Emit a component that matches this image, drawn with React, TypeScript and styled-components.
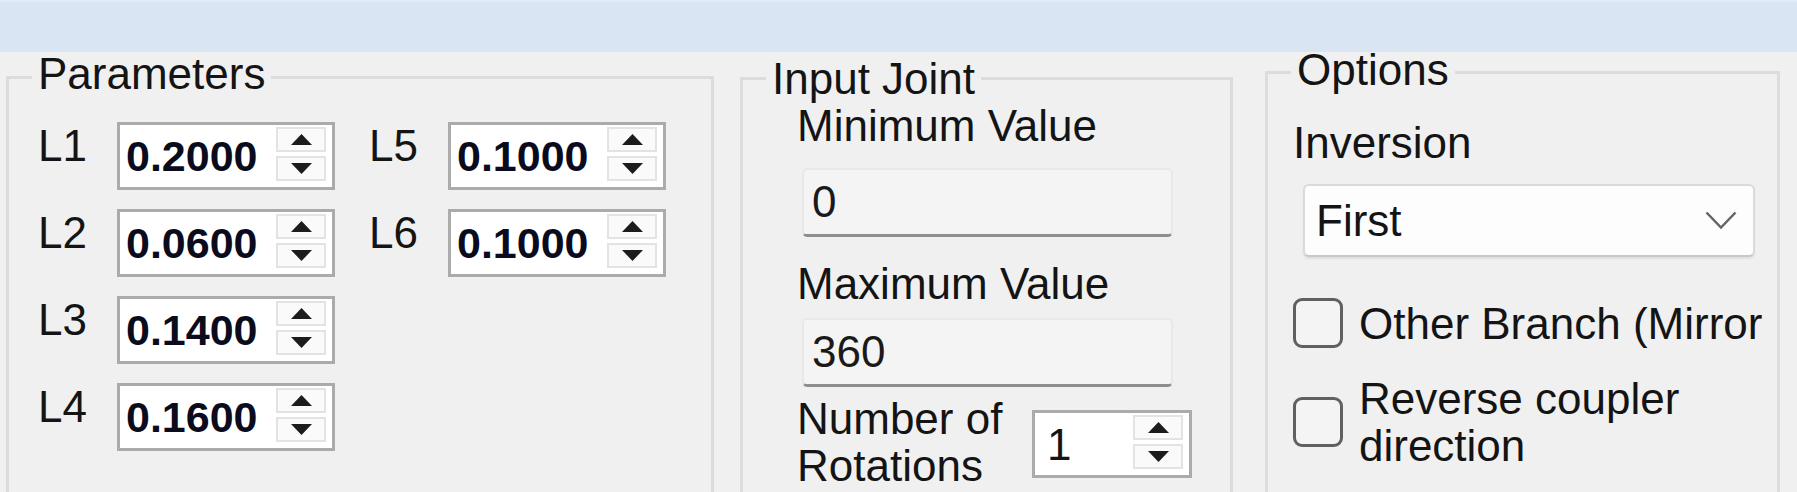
import styled, { createGlobalStyle } from "styled-components";

const GlobalStyle = createGlobalStyle`
  html, body {
    margin: 0;
    padding: 0;
    background: #f0f0f0;
  }
  body {
    font-family: "Liberation Sans", Arial, sans-serif;
    font-size: 44px;
    color: #141414;
  }
`;

const Window = styled.div`
  width: 1797px;
  height: 492px;
  overflow: hidden;
  display: flex;
  flex-direction: column;
  background: #f0f0f0;
`;

const TitleBand = styled.div`
  flex: none;
  height: 52px;
  box-sizing: border-box;
  background: #d9e5f2;
  border-top: 2px solid #e3ecf6;
`;

const Panels = styled.div`
  flex: 1;
  min-height: 0;
  display: flex;
  align-items: flex-start;
  padding-left: 6px;
`;

const Group = styled.fieldset<{ $width: number; $top: number; $left?: number }>`
  flex: none;
  box-sizing: border-box;
  width: ${(p) => p.$width}px;
  height: 480px;
  min-width: 0;
  margin: ${(p) => p.$top}px 0 0 ${(p) => p.$left ?? 0}px;
  padding: 0;
  border: 3px solid #dcdcdc;
`;

const GroupTitle = styled.legend<{ $lh: number; $padBottom?: number }>`
  margin-left: 23px;
  padding: 0 6px ${(p) => p.$padBottom ?? 0}px;
  line-height: ${(p) => p.$lh}px;
  white-space: nowrap;
`;

/* ---------- Parameters ---------- */

const ParamGrid = styled.div`
  display: grid;
  grid-template-rows: repeat(4, 68px);
  grid-auto-flow: column;
  grid-auto-columns: max-content;
  row-gap: 19px;
  column-gap: 34px;
  padding: 20px 0 0 29px;
`;

const ParamField = styled.div`
  display: flex;
  align-items: flex-start;
`;

const ParamLabel = styled.div`
  width: 79px;
  line-height: 47px;
`;

const SpinBox = styled.div<{ $width: number }>`
  box-sizing: border-box;
  width: ${(p) => p.$width}px;
  height: 68px;
  display: flex;
  background: #fff;
  border: 3px solid #ababab;
`;

const SpinValue = styled.div<{ $bold?: boolean }>`
  flex: 1;
  align-self: center;
  padding-left: ${(p) => (p.$bold ? 6 : 12)}px;
  font-size: ${(p) => (p.$bold ? 43 : 44)}px;
  font-weight: ${(p) => (p.$bold ? 700 : 400)};
  color: ${(p) => (p.$bold ? "#0b0b1e" : "#141414")};
  line-height: 47px;
`;

const SpinButtons = styled.div`
  width: 50px;
  display: flex;
  flex-direction: column;
  gap: 4px;
  padding: 2px 6px 6px 0;
`;

const SpinButton = styled.div`
  flex: 1;
  display: flex;
  align-items: center;
  justify-content: center;
  background: #fafafa;
  border: 2px solid #e3e3e3;
`;

function Arrow({ up }: { up?: boolean }) {
  return (
    <svg width="21" height="11" viewBox="0 0 21 11">
      <polygon points={up ? "10.5,0 21,11 0,11" : "0,0 21,0 10.5,11"} fill="#1c1c1c" />
    </svg>
  );
}

function Spinner({ value, width, bold }: { value: string; width: number; bold?: boolean }) {
  return (
    <SpinBox $width={width}>
      <SpinValue $bold={bold}>{value}</SpinValue>
      <SpinButtons>
        <SpinButton>
          <Arrow up />
        </SpinButton>
        <SpinButton>
          <Arrow />
        </SpinButton>
      </SpinButtons>
    </SpinBox>
  );
}

/* ---------- Input Joint ---------- */

const JointBody = styled.div`
  display: flex;
  flex-direction: column;
  align-items: flex-start;
  padding-left: 54px;
`;

const Caption = styled.div<{ $mt?: number }>`
  margin-top: ${(p) => p.$mt ?? 0}px;
  line-height: 47px;
  white-space: nowrap;
`;

const ReadOnlyBox = styled.div<{ $mt: number }>`
  box-sizing: border-box;
  width: 371px;
  height: 69px;
  margin: ${(p) => p.$mt}px 0 0 5px;
  padding-left: 8px;
  display: flex;
  align-items: center;
  background: #f4f4f4;
  border: 2px solid #e8e8e8;
  border-bottom: 3px solid #8e8e8e;
  border-radius: 5px;
  color: #1a1a1a;
`;

const RotationRow = styled.div`
  display: flex;
  align-items: center;
  margin-top: 8px;
`;

const RotationLabel = styled.div`
  width: 235px;
  line-height: 47px;
`;

const RotationSpin = styled.div`
  margin-top: 4px;
`;

/* ---------- Options ---------- */

const OptionsBody = styled.div`
  display: flex;
  flex-direction: column;
  align-items: flex-start;
  padding: 27px 0 0 25px;
`;

const Combo = styled.div`
  box-sizing: border-box;
  width: 452px;
  height: 73px;
  margin: 18px 0 0 10px;
  padding: 0 16px 0 11px;
  display: flex;
  align-items: center;
  justify-content: space-between;
  background: #fdfdfd;
  border: 2px solid #dadada;
  border-bottom-color: #c8c8c8;
  border-radius: 6px;
  box-shadow: 0 2px 2px rgba(0, 0, 0, 0.07);
`;

const CheckRow = styled.label<{ $mt: number }>`
  display: flex;
  align-items: center;
  gap: 16px;
  width: 476px;
  margin: ${(p) => p.$mt}px 0 0 0;
`;

const CheckBox = styled.span`
  flex: none;
  box-sizing: border-box;
  width: 50px;
  height: 50px;
  border: 3px solid #606060;
  border-radius: 9px;
  background: #f4f4f4;
`;

const CheckText = styled.span<{ $nowrap?: boolean }>`
  flex: 1;
  min-width: 0;
  line-height: 47px;
  white-space: ${(p) => (p.$nowrap ? "nowrap" : "normal")};
`;

function Chevron() {
  return (
    <svg width="32" height="19" viewBox="0 0 32 19">
      <polyline points="1.5,1.5 16,16.5 30.5,1.5" fill="none" stroke="#646464" strokeWidth="2.5" />
    </svg>
  );
}

const params = [
  { name: "L1", value: "0.2000" },
  { name: "L2", value: "0.0600" },
  { name: "L3", value: "0.1400" },
  { name: "L4", value: "0.1600" },
  { name: "L5", value: "0.1000" },
  { name: "L6", value: "0.1000" },
];

export default function App() {
  return (
    <>
      <GlobalStyle />
      <Window>
        <TitleBand />
        <Panels>
          <Group $width={708} $top={0}>
            <GroupTitle $lh={44} $padBottom={6}>Parameters</GroupTitle>
            <ParamGrid>
              {params.map((p) => (
                <ParamField key={p.name}>
                  <ParamLabel>{p.name}</ParamLabel>
                  <Spinner value={p.value} width={218} bold />
                </ParamField>
              ))}
            </ParamGrid>
          </Group>

          <Group $width={493} $top={3} $left={26}>
            <GroupTitle $lh={47}>Input Joint</GroupTitle>
            <JointBody>
              <Caption>Minimum Value</Caption>
              <ReadOnlyBox $mt={19}>0</ReadOnlyBox>
              <Caption $mt={23}>Maximum Value</Caption>
              <ReadOnlyBox $mt={11}>360</ReadOnlyBox>
              <RotationRow>
                <RotationLabel>Number of Rotations</RotationLabel>
                <RotationSpin>
                  <Spinner value="1" width={160} />
                </RotationSpin>
              </RotationRow>
            </JointBody>
          </Group>

          <Group $width={515} $top={0} $left={32}>
            <GroupTitle $lh={36} $padBottom={4}>Options</GroupTitle>
            <OptionsBody>
              <Caption>Inversion</Caption>
              <Combo>
                <span>First</span>
                <Chevron />
              </Combo>
              <CheckRow $mt={41}>
                <CheckBox />
                <CheckText $nowrap>Other Branch (Mirror</CheckText>
              </CheckRow>
              <CheckRow $mt={27}>
                <CheckBox />
                <CheckText>Reverse coupler direction</CheckText>
              </CheckRow>
            </OptionsBody>
          </Group>
        </Panels>
      </Window>
    </>
  );
}
